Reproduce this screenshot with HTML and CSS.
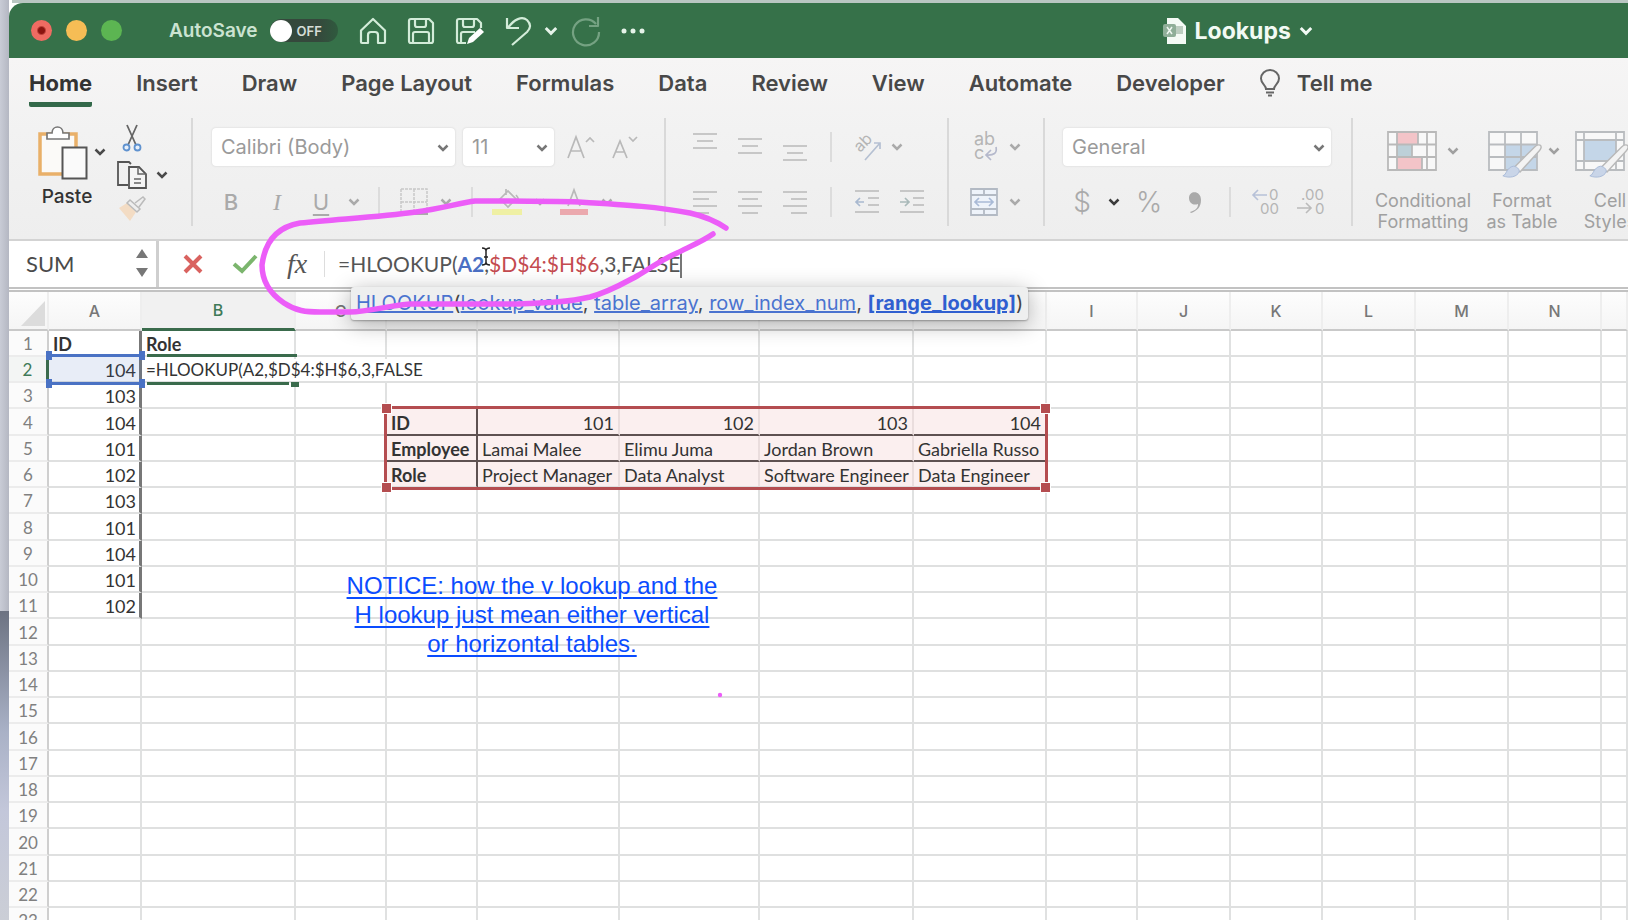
FILE: index.html
```html
<!DOCTYPE html>
<html lang="en">
<head>
<meta charset="utf-8">
<title>Lookups</title>
<link rel="stylesheet" href="styles.css">
</head>
<body>
<svg class="defs" width="0" height="0" aria-hidden="true">
  <symbol id="chev" viewBox="0 0 12 8"><path d="M1.5 1.5 6 6l4.500-4.500" fill="none" stroke="currentColor" stroke-width="2.500"/></symbol>
  <symbol id="brush" viewBox="0 0 44 38"><path d="M42 3c2 1 1 4-1 6L21 31l-6-5L36 5c2-2 4-3 6-2z" fill="#f3f3f3" stroke="#b9b9b9" stroke-width="1.500"/><path d="M14 25c3 0 7 3 6 6-2 5-10 7-17 4 4-1 4-9 11-10z" fill="#c9d5e8" stroke="#a9bbd8"/></symbol>
</svg>

<div class="window">
  <header class="titlebar">
    <div class="lights">
      <button class="light close" aria-label="Close"></button>
      <button class="light minimize" aria-label="Minimize"></button>
      <button class="light zoom" aria-label="Zoom"></button>
    </div>
    <label class="autosave"><span>AutoSave</span><input type="checkbox" class="sr"><span class="switch"><span class="knob"></span>OFF</span></label>
    <div class="quick">
      <button aria-label="Home"><svg width="28" height="28" viewBox="0 0 28 28"><path d="M2 13.500 14 2l12 11.500V25q0 1-1 1h-6v-8q0-3-3-3h-4q-3 0-3 3v8H3q-1 0-1-1z" class="ln"/></svg></button>
      <button aria-label="Save"><svg width="28" height="28" viewBox="0 0 28 28"><path d="M4 2h18l4 4v18q0 2-2 2H4q-2 0-2-2V4q0-2 2-2zM8 2v6q0 2 2 2h7q2 0 2-2V2M6 26V17q0-2 2-2h12q2 0 2 2v9" class="ln"/></svg></button>
      <button aria-label="Save as"><svg width="30" height="28" viewBox="0 0 30 28"><path d="M11 26H4q-2 0-2-2V4q0-2 2-2h18l4 4v5M8 2v6q0 2 2 2h7q2 0 2-2V2M6 26V17q0-2 2-2h12" class="ln"/><path d="M12 27l2-6L25 11l4 4-11 10z" fill="#fff"/></svg></button>
      <span class="history">
        <button aria-label="Undo"><svg width="28" height="30" viewBox="0 0 28 30"><path d="M2 2v10h12M3 12C9 3 17 0 22 4c5 5 3 9 0 12L7 29" class="ln"/></svg></button>
        <button aria-label="Undo history"><svg width="14" height="10"><use href="#chev"/></svg></button>
        <button aria-label="Redo" class="dim"><svg width="30" height="30" viewBox="0 0 30 30"><path d="M27 1v9h-9M25 8A13 13 0 1 0 28 16" class="ln"/></svg></button>
      </span>
      <button aria-label="More commands"><svg width="24" height="6" viewBox="0 0 24 6"><circle cx="3" cy="3" r="2.500"/><circle cx="12" cy="3" r="2.500"/><circle cx="21" cy="3" r="2.500"/></svg></button>
    </div>
    <button class="doc"><svg width="25" height="28" viewBox="0 0 25 28"><path d="M5 1h11l8 8v18H5z" fill="#f4faf5"/><path d="M12 9h9v8h-9z" fill="#bccdc0"/><rect x="1" y="7" width="13" height="13" rx="2" fill="#8fae98"/><path d="m5 10 5 7m0-7-5 7" stroke="#eef6f0" stroke-width="1.500"/></svg><span>Lookups</span><svg width="14" height="10"><use href="#chev"/></svg></button>
  </header>

  <section class="ribbon">
    <nav class="tabs">
      <button class="tab active">Home</button><button class="tab">Insert</button><button class="tab">Draw</button><button class="tab">Page Layout</button><button class="tab">Formulas</button><button class="tab">Data</button><button class="tab">Review</button><button class="tab">View</button><button class="tab">Automate</button><button class="tab">Developer</button>
      <button class="tab tell"><svg width="22" height="28" viewBox="0 0 22 28"><path d="M7 20c0-4-5-5-5-10.500a9 8.500 0 0 1 18 0C20 15 15 16 15 20zM7 23.500h8M9 26.500h4" fill="none" stroke="#666" stroke-width="2"/></svg>Tell me</button>
    </nav>
    <div class="commands">
      <div class="group clipboard">
        <button class="paste">
          <svg width="50" height="56" viewBox="0 0 50 56"><path d="M2 9h36v40H2z" fill="#fbfaf8" stroke="#e9b069" stroke-width="3.500"/><path d="M9 14V8h5c0-8 11-8 11 0h6v6z" fill="#fff" stroke="#777" stroke-width="1.700"/><path d="M24.500 22.500h24v31h-24z" fill="#fafafa" stroke="#555" stroke-width="2"/></svg>
          <span>Paste</span>
        </button>
        <button class="paste-menu" aria-label="Paste options"><svg width="12" height="8"><use href="#chev"/></svg></button>
        <div class="clips">
          <button aria-label="Cut"><svg width="20" height="28" viewBox="0 0 20 28"><path d="m5 1 9 20M15 1 6 21" stroke="#666" stroke-width="1.800"/><circle cx="4.500" cy="23.500" r="3" fill="#e6effa" stroke="#5f92cf" stroke-width="1.800"/><circle cx="15.500" cy="23.500" r="3" fill="#e6effa" stroke="#5f92cf" stroke-width="1.800"/></svg></button><span></span>
          <button aria-label="Copy"><svg width="30" height="30" viewBox="0 0 30 30"><path d="M11 25H1V2h11l2 2" fill="none" stroke="#555" stroke-width="1.800"/><path d="M12 7h10l7 7v14H12z" fill="#f5f5f5" stroke="#555" stroke-width="1.800"/><path d="M21 7v7h8M17 19h7M17 23h7" fill="none" stroke="#666" stroke-width="1.500"/></svg></button>
          <button aria-label="Copy options"><svg width="12" height="8"><use href="#chev"/></svg></button>
          <button aria-label="Format painter"><svg width="28" height="26" viewBox="0 0 28 26"><path d="m1 12 8-5 9 9-6 9z" fill="#f3dcc4"/><path d="m9 7 3-3 10 9-3 3zM17 7l8-6 2 2-6 8" fill="#eee" stroke="#bbb" stroke-width="1.500"/></svg></button>
        </div>
      </div>

      <div class="group font">
        <div class="row top">
          <div class="combo wide"><select aria-label="Font"><option>Calibri (Body)</option></select><svg width="12" height="8"><use href="#chev"/></svg></div>
          <div class="combo size"><select aria-label="Font size"><option>11</option></select><svg width="12" height="8"><use href="#chev"/></svg></div>
          <button aria-label="Grow font"><svg width="28" height="26" viewBox="0 0 28 26"><path d="m2 24 8-21 8 21M5 17h10M20 8l4-4 4 4" class="g"/></svg></button>
          <button aria-label="Shrink font"><svg width="28" height="26" viewBox="0 0 28 26"><path d="m2 24 7-17 7 17M4 18h10M18 3l4 4 4-4" class="g"/></svg></button>
        </div>
        <div class="row fontrow">
          <button class="bold">B</button><button class="italic">I</button><button class="under">U</button>
          <button aria-label="Underline options"><svg width="12" height="8"><use href="#chev"/></svg></button>
          <i class="bar"></i>
          <button aria-label="Borders"><svg width="28" height="28" viewBox="0 0 28 28"><path d="M1 1h26v25M1 1v25M14 1v25M1 14h26" fill="none" stroke="#c8c8c8" stroke-width="1.500" stroke-dasharray="3 1"/><path d="M0 26h28" stroke="#aaa" stroke-width="2"/></svg></button>
          <button aria-label="Border options"><svg width="12" height="8"><use href="#chev"/></svg></button>
          <i class="bar"></i>
          <button aria-label="Fill color"><svg width="30" height="30" viewBox="0 0 30 30"><path d="m8 12 8-8 8 8-8 8zM14 2v6M24 8q3 3 2 6" class="g"/><path d="M0 22h30v6H0z" fill="#eff0a4"/></svg></button>
          <button aria-label="Fill options"><svg width="12" height="8"><use href="#chev"/></svg></button>
          <button aria-label="Font color"><svg width="28" height="30" viewBox="0 0 28 30"><path d="m8 19 6-16 6 16M10 13h8" class="g"/><path d="M0 22h28v6H0z" fill="#eba9ae"/></svg></button>
          <button aria-label="Font color options"><svg width="12" height="8"><use href="#chev"/></svg></button>
        </div>
      </div>

      <div class="group align">
        <div class="row alignrow first">
          <button aria-label="Top align"><svg width="26" height="30" viewBox="0 0 26 30"><path d="M1 2h24M5 9h16M1 16h24" class="g"/></svg></button>
          <button aria-label="Middle align"><svg width="26" height="30" viewBox="0 0 26 30"><path d="M1 7h24M5 14h16M1 21h24" class="g"/></svg></button>
          <button aria-label="Bottom align"><svg width="26" height="30" viewBox="0 0 26 30"><path d="M1 14h24M5 21h16M1 28h24" class="g"/></svg></button>
          <i class="bar"></i>
          <button aria-label="Orientation"><svg width="30" height="28" viewBox="0 0 30 28"><text x="0" y="0" transform="translate(8 20) rotate(-45)" class="glyph">ab</text><path d="M13 27 28 10M22 10h6v6" fill="none" stroke="#b5c0d2" stroke-width="1.700"/></svg></button>
          <button aria-label="Orientation options"><svg width="12" height="8"><use href="#chev"/></svg></button>
        </div>
        <div class="row alignrow">
          <button aria-label="Align left"><svg width="26" height="24" viewBox="0 0 26 24"><path d="M1 2h24M1 9h16M1 16h24M1 23h16" class="g"/></svg></button>
          <button aria-label="Center"><svg width="26" height="24" viewBox="0 0 26 24"><path d="M1 2h24M5 9h16M1 16h24M5 23h16" class="g"/></svg></button>
          <button aria-label="Align right"><svg width="26" height="24" viewBox="0 0 26 24"><path d="M1 2h24M9 9h16M1 16h24M9 23h16" class="g"/></svg></button>
          <i class="bar"></i>
          <button aria-label="Decrease indent"><svg width="26" height="24" viewBox="0 0 26 24"><path d="M1 1h24M14 8h11M14 15h11M1 22h24" class="g"/><path d="M10 12H2m4-4-4 4 4 4" fill="none" stroke="#a9b9d0" stroke-width="1.700"/></svg></button>
          <button aria-label="Increase indent"><svg width="26" height="24" viewBox="0 0 26 24"><path d="M1 1h24M14 8h11M14 15h11M1 22h24" class="g"/><path d="M1 12h9m-4-4 4 4-4 4" fill="none" stroke="#a9b9b9" stroke-width="1.700"/></svg></button>
        </div>
      </div>

      <div class="group wrap">
        <div class="row pair">
          <button aria-label="Wrap text"><svg width="28" height="32" viewBox="0 0 28 32"><text x="4" y="14" class="glyph big">ab</text><text x="4" y="28" class="glyph big">c</text><path d="M26 16q2 9-10 8m5-5-5 5 5 5" fill="none" stroke="#b5b9cc" stroke-width="1.700"/></svg></button>
          <button aria-label="Wrap options"><svg width="12" height="8"><use href="#chev"/></svg></button>
        </div>
        <div class="row pair">
          <button aria-label="Merge"><svg width="28" height="28" viewBox="0 0 28 28"><path d="M1 1h26v26H1zM1 7h26M1 21h26M14 1v6M14 21v6" fill="#eef3fa" stroke="#b3bac4" stroke-width="1.800"/><path d="M5 14h18m-14-4-4 4 4 4m10-8 4 4-4 4" fill="none" stroke="#a9bad6" stroke-width="1.700"/></svg></button>
          <button aria-label="Merge options"><svg width="12" height="8"><use href="#chev"/></svg></button>
        </div>
      </div>

      <div class="group number">
        <div class="row top">
          <div class="combo full"><select aria-label="Number format"><option>General</option></select><svg width="12" height="8"><use href="#chev"/></svg></div>
        </div>
        <div class="row numrow">
          <button class="sym">$</button>
          <button class="dark" aria-label="Currency options"><svg width="12" height="8"><use href="#chev"/></svg></button>
          <button class="sym">%</button>
          <button aria-label="Comma style"><svg width="14" height="22" viewBox="0 0 14 22"><path d="M2 21c6-2 8-4 8-8C4 15 1 11 1 7c0-8 12-8 12 2 0 7-4 11-10 13z" fill="#aaa"/></svg></button>
          <i class="bar"></i>
          <button aria-label="Increase decimal"><svg width="30" height="30" viewBox="0 0 30 30"><text x="18" y="13" class="glyph num">0</text><text x="9" y="27" class="glyph num">00</text><path d="M16 8H2m5-5L2 8l5 5" fill="none" stroke="#b7c1d8" stroke-width="1.600"/></svg></button>
          <button aria-label="Decrease decimal"><svg width="30" height="30" viewBox="0 0 30 30"><text x="5" y="13" class="glyph num">.00</text><text x="19" y="27" class="glyph num">0</text><path d="M1 21h14m-5-5 5 5-5 5" fill="none" stroke="#bbb" stroke-width="1.600"/></svg></button>
        </div>
      </div>

      <div class="group styles">
        <button class="style cond"><span class="pic"><svg width="50" height="40" viewBox="0 0 50 40"><path d="M1 1h48v38H1z" fill="#f8f8f8"/><path d="M10 1h21v12H10zM10 26h25v12H10z" fill="#f3c4c8"/><path d="M10 14h15v12H10z" fill="#bdd0d8"/><path d="M1 1h48v38H1zM1 13.500h48M1 26h48M10 1v38M31 1v12M25 14v12M35 26v12M40 1v38" fill="none" stroke="#b9b9b9" stroke-width="1.800"/></svg><svg width="12" height="8"><use href="#chev"/></svg></span><span>Conditional<br>Formatting</span></button>
        <button class="style"><span class="pic"><svg width="54" height="48" viewBox="0 0 54 48"><path d="M1 1h48v38H1z" fill="#f8f8f8"/><path d="M17 13h32v26H17z" fill="#c4d6e8"/><path d="M1 1h48v38H1zM1 13.500h48M1 26h48M17 1v38M33 1v38" fill="none" stroke="#b9bcbf" stroke-width="1.800"/><use href="#brush" x="12" y="11" width="42" height="37"/></svg><svg width="12" height="8"><use href="#chev"/></svg></span><span>Format<br>as Table</span></button>
        <button class="style cell"><span class="pic"><svg width="54" height="48" viewBox="0 0 54 48"><path d="M1 1h48v38H1z" fill="#f8f8f8"/><path d="M9 9h32v21H9z" fill="#c4d6e8"/><path d="M1 1h48v38H1zM1 9h48M1 30h48M9 1v38M41 1v38" fill="none" stroke="#b9bcbf" stroke-width="1.800"/><use href="#brush" x="12" y="11" width="42" height="37"/></svg></span><span>Cell<br>Styles</span></button>
      </div>
    </div>
  </section>

  <section class="formula-bar">
    <div class="namebox"><input type="text" value="SUM" aria-label="Name box"><svg width="12" height="30" viewBox="0 0 12 30"><path d="M6 1l6 9H0zM6 29l6-9H0z" fill="#777"/></svg></div>
    <div class="entry">
      <button aria-label="Cancel"><svg width="20" height="20" viewBox="0 0 20 20"><path d="m2 2 16 16M18 2 2 18" stroke="#d9625f" stroke-width="4"/></svg></button>
      <button aria-label="Enter"><svg width="26" height="20" viewBox="0 0 26 20"><path d="m2 10 8 7L24 2" fill="none" stroke="#7bb56d" stroke-width="4"/></svg></button>
      <button class="fx" aria-label="Insert function">fx</button>
      <div class="formula" role="textbox" aria-label="Formula" contenteditable="true" spellcheck="false">=HLOOKUP(<span class="blue">A2</span>,<span class="red">$D$4:$H$6</span>,3,FALSE</div><i class="caret"></i>
    </div>
    <div class="hint"><a href="#">HLOOKUP</a>(<a href="#">lookup_value</a>, <a href="#">table_array</a>, <a href="#">row_index_num</a>, <a href="#" class="now">[range_lookup]</a>)</div>
  </section>

  <main class="sheet">
    <table>
      <colgroup><col class="w-head"><col class="w93"><col class="w154"><col class="w91"><col class="w91"><col class="w142"><col class="w140"><col class="w154"><col class="w133"><col class="w91"><col class="w93"><col class="w92"><col class="w93"><col class="w93"><col class="w93"><col></colgroup>
      <thead><tr id="letters"></tr></thead>
      <tbody id="rows"></tbody>
    </table>
    <div class="pick a2"><i></i><i></i><i></i><i></i></div>
    <div class="edit-line upper"></div><div class="edit-line lower"></div><i class="grip"></i>
    <div class="pick range"><i></i><i></i><i></i><i></i></div>
    <a class="note" href="#">NOTICE: how the v lookup and the<br>H lookup just mean either vertical<br>or horizontal tables.</a>
  </main>

  <svg class="ink" width="720" height="720" viewBox="0 0 720 720" aria-hidden="true">
    <path d="M717 225C708 219 699 214 681 210 650 204 620 202 570 199 535 198 500 198 466 198 451 200 430 206 407 209 370 214 330 216 291 220 268 224 256 238 253 262 253 278 260 290 275 300 287 308 297 309 311 309L341 309C360 309 382 302 401 301L508 301C535 300 560 299 581 294 600 289 615 280 628 273 642 265 650 258 668 250 682 243 694 238 704 231" fill="none" stroke="#ec5df8" stroke-width="5.500" stroke-linecap="round" stroke-linejoin="round"/>
    <circle cx="711" cy="692" r="2.200" fill="#ec5df8"/>
    <path d="M474 245q3 0 3 3v10q0 3-3 3M480 245q-3 0-3 3v10q0 3 3 3M475 254h4" fill="none" stroke="#fff" stroke-width="3"/>
    <path d="M473 245q4 0 4 3v11q0 3-4 3M481 245q-4 0-4 3v11q0 3 4 3M475 254h4" fill="none" stroke="#222" stroke-width="1.500"/>
  </svg>
</div>
<script src="script.js"></script>
</body>
</html>
```

FILE: styles.css
```css
* { box-sizing: border-box; }
body {
  margin: 0;
  height: 100vh;
  overflow: hidden;
  padding: 3px 0 0 9px;
  background:
    linear-gradient(#b9c6c2, #b9c6c2) 12px 0 / 100% 3px no-repeat,
    linear-gradient(#6d7382, #a9b1c6 120px, #c3c7da 200px, #cbced6) 0 611px / 100% 309px no-repeat,
    linear-gradient(90deg, #c9ccd6, #b4b7c2) 0 0 / 9px 100% repeat-y;
  font-family: Inter, "Open Sans", sans-serif;
  color: #333;
}
.defs { position: absolute; }
button { background: none; border: 0; padding: 0; margin: 0; font: inherit; color: inherit; display: flex; align-items: center; justify-content: center; }
svg { display: block; flex: none; }
button svg { overflow: visible; }
.sr { position: absolute; opacity: 0; }
.window { position: relative; height: 100%; display: flex; flex-direction: column; overflow: hidden; border-top-left-radius: 14px; background: #fff; }

.titlebar { flex: none; height: 55px; display: flex; align-items: center; background: #367149; color: #e6f3e9; padding-left: 22px; }
.lights { display: flex; gap: 14px; }
.light { width: 21px; height: 21px; border-radius: 50%; }
.close { background: radial-gradient(circle, #8b1410 0 3px, #ef6b62 5px); }
.minimize { background: #f6bd55; }
.zoom { background: #5cb552; }
.autosave { display: flex; align-items: center; gap: 12px; margin-left: 47px; font-size: 19px; font-weight: 600; color: #cbe3d1; }
.switch { display: flex; align-items: center; gap: 5px; width: 68px; height: 23px; border-radius: 12px; background: linear-gradient(90deg, #35483c 70%, #2f5a3e); font-size: 13px; color: #d5ddd7; }
.knob { width: 22px; height: 22px; border-radius: 50%; background: #fff; }
.quick { display: flex; align-items: center; gap: 20px; margin-left: 21px; fill: #e6f3e9; }
.history { display: flex; align-items: center; gap: 13px; }
.history button:nth-child(2) { margin-left: -2px; }
.quick .dim { opacity: 0.4; }
.ln { fill: none; stroke: #d3ecd9; stroke-width: 2.2; stroke-linejoin: round; }
.doc { gap: 8px; margin-left: 517px; font-size: 23px; font-weight: 700; color: #f2faf4; }

.ribbon { flex: none; height: 183px; background: linear-gradient(#f6f5f5, #f2f2f2 40%, #eeeeee); border-bottom: 2px solid #d3d3d3; overflow: hidden; }
.tabs { display: flex; height: 60px; padding-left: 20px; gap: 44px; }
.tab { flex: none; height: 49px; padding-top: 5px; font-size: 22px; font-weight: 600; color: #484848; border-bottom: 5px solid transparent; border-radius: 2px; }
.tab.active { font-weight: 700; color: #333; border-bottom-color: #33694a; }
.tell { gap: 16px; margin-left: -10px; }
.commands { display: flex; height: 108px; }
.group { flex: none; border-right: 2px solid #d9d9d9; color: #aaa; }
.row { display: grid; align-items: center; justify-items: center; justify-content: start; height: 54px; }
.g { fill: none; stroke: #b9b9b9; stroke-width: 1.7; }
.glyph { font: 16px Inter, sans-serif; fill: #b5b5b5; }
.glyph.big { font-size: 18px; }
.glyph.num { font-size: 15px; }
.bar { width: 2px; height: 30px; background: #dcdcdc; }
.clipboard { width: 184px; display: grid; grid-template-columns: 50px 24px 1fr; padding-left: 29px; color: #4a4a4a; }
.paste { flex-direction: column; justify-content: flex-start; padding-top: 7px; gap: 4px; font-size: 19px; font-weight: 500; color: #333; }
.paste span { padding-left: 8px; }
.paste-menu { height: 68px; }
.clips { display: grid; grid-template-columns: 40px 20px; grid-template-rows: 40px 34px 34px; align-items: center; }
.clips button { height: 100%; }
.font { width: 473px; padding-left: 19px; }
.font .top { grid-template-columns: 243px 91px 36px 38px; column-gap: 8px; }
.row.top { padding-top: 4px; }
.combo { position: relative; width: 100%; height: 38px; }
.combo select { appearance: none; width: 100%; height: 100%; border: 0; border-radius: 4px; background: #fff; padding: 0 9px; font-family: inherit; font-size: 20px; color: #9a9a9a; box-shadow: 0 0 2px #ccc; }
.combo svg { position: absolute; right: 6px; top: 16px; color: #777; }
.fontrow { grid-template-columns: 38px 54px 34px 32px 18px 52px 12px 40px 30px 36px 32px 34px; font-size: 22px; }
.bold { font-weight: 500; }
.italic { font: italic 24px "Liberation Serif", serif; }
.under { text-decoration: underline; text-underline-offset: 4px; }
.align { width: 283px; padding-left: 16px; }
.alignrow { grid-template-columns: 45px 45px 45px 27px 45px 45px; padding-top: 4px; }
.alignrow.first { grid-template-columns: 45px 45px 45px 27px 45px 16px; }
.row + .row { padding-top: 2px; height: 58px; }
.wrap { width: 96px; padding-left: 14px; }
.pair { grid-template-columns: 42px 12px; column-gap: 4px; padding-top: 4px; }
.number { width: 308px; padding: 0 18px; }
.number .top { grid-template-columns: 268px; }
.numrow { grid-template-columns: 38px 26px 44px 48px 22px 50px 40px; }
.sym { font: 300 28px Inter, sans-serif; }
.dark { color: #3c3c3c; }
.styles { display: flex; border: 0; gap: 7px; padding-left: 21px; }
.style { width: 86px; flex-direction: column; justify-content: flex-start; padding-top: 13px; font-size: 18px; line-height: 21px; color: #a0a0a0; }
.style.cond { width: 98px; }
.style.cell { width: 76px; }
.pic { flex: none; display: flex; gap: 6px; width: 100%; height: 55px; align-items: flex-start; padding-left: 9px; }
.style .pic + span { margin-top: 4px; }
.pic svg + svg { margin-top: 16px; }
.cond .pic { padding-left: 13px; gap: 10px; }
.cell .pic { padding-left: 3px; }

.formula-bar { flex: none; position: relative; z-index: 2; display: flex; height: 51px; border-bottom: 5px double #c2c2c2; background: #fff; }
.namebox { display: flex; align-items: center; width: 150px; padding: 0 8px 2px 17px; border-right: 3px solid #cfcfcf; }
.namebox input { flex: 1; min-width: 0; border: 0; padding: 0; background: none; font: 22px Lato, sans-serif; color: #4a4a4a; }
.entry { flex: 1; display: flex; align-items: center; padding-left: 24px; }
.entry button { flex: none; width: 20px; margin-right: 32px; }
.entry .fx { margin-right: 17px; font: italic 28px "Liberation Serif", serif; color: #555; }
.formula { border-left: 1px solid #ddd; padding-left: 13px; font: 21px/26px Lato, sans-serif; color: #555; white-space: nowrap; outline: 0; }
.blue { color: #4a6fc4; font-weight: 700; }
.red { color: #c44b50; }
.caret { width: 2px; height: 28px; background: #777; }
.hint { position: absolute; left: 342px; top: 46px; height: 33px; padding: 0 5px; border-radius: 3px; background: #eeefef; box-shadow: 0 4px 22px rgba(0, 0, 0, 0.3), 0 1px 2px rgba(0, 0, 0, 0.3); font-size: 20px; line-height: 33px; white-space: nowrap; color: #444; }
.hint a { color: #4a73cf; }
.hint .now { font-weight: 700; color: #2f5fd0; }

.sheet { position: relative; flex: 1; min-height: 0; overflow: hidden; }
table { table-layout: fixed; width: 100%; border-collapse: separate; border-spacing: 0; font: 18px/22px Lato, sans-serif; color: #333; }
.w-head { width: 40px; } .w91 { width: 91px; } .w92 { width: 92px; } .w93 { width: 93px; } .w133 { width: 133px; } .w140 { width: 140px; } .w142 { width: 142px; } .w154 { width: 154px; }
thead th { height: 39px; padding: 0; font: 500 16px Inter, sans-serif; color: #777; background: linear-gradient(#fdfdfd, #f5f5f5); border-bottom: 2px solid #c9c9c9; border-right: 2px solid #eeeeee; }
thead th.on { background: #f1f1f1; color: #3f7a58; border-bottom: 3px solid #3a6b4c; }
.corner svg { margin: 6px 0 0 12px; }
tbody tr { height: 26px; }
tbody tr:nth-child(4n) { height: 27px; }
td, tbody th { height: inherit; padding: 2px 0 0 4px; border-right: 2px solid #e0e1e1; border-bottom: 2px solid #dfe0e0; white-space: nowrap; }
tbody th { padding: 2px 0 0; font-size: 17px; font-weight: 400; text-align: center; color: #808080; background: #fbfbfb; border-right-color: #cfcfcf; border-bottom-color: #ececec; }
tbody th.on { color: #3f7a58; background: #f3f5f4; border-right: 3px solid #3a6b4c; }
td.n { text-align: right; padding-right: 4px; }
td.b { font-weight: 700; }
td.edge { border-right: 3px solid #777; padding-right: 3px; }
td.tint { background: #fbefef; border-right-color: #eadddd; }
td.tint.b { border-right-color: #5e5151; }
td.rule { border-bottom-color: #5e5151; }
.typing { position: relative; z-index: 1; display: block; width: max-content; font-size: 17px; background: #fff; }
.pick { position: absolute; }
.pick i { position: absolute; width: 9px; height: 9px; }
.pick i:nth-child(1) { left: -6px; top: -6px; }
.pick i:nth-child(2) { right: -6px; top: -6px; }
.pick i:nth-child(3) { left: -6px; bottom: -6px; }
.pick i:nth-child(4) { right: -6px; bottom: -6px; }
.a2 { left: 40px; top: 62px; width: 93px; height: 31px; border: 3px solid #4a72c4; border-left-color: transparent; border-right-color: transparent; background: rgba(74, 114, 196, 0.13); }
.a2 i { background: #4a72c4; width: 6px; }
.range { left: 375px; top: 114px; width: 664px; height: 84px; border: 3px solid #b44d50; }
.range i { background: #b44d50; border: 1px solid #fff; width: 11px; height: 11px; }
.edit-line { position: absolute; left: 138px; height: 3px; background: #3a6b4c; }
.upper { top: 62px; width: 150px; }
.lower { top: 90px; width: 142px; }
.grip { position: absolute; left: 282px; top: 90px; width: 8px; height: 5px; background: #3a6b4c; }
.note { position: absolute; left: 323px; top: 279px; width: 400px; text-align: center; font: 24px/29px "Liberation Sans", Arial, sans-serif; color: #0a4cff; white-space: nowrap; text-underline-offset: 3px; }
.ink { position: absolute; left: 0; top: 0; z-index: 3; pointer-events: none; }
```

FILE: script.js
```javascript
const letters = "ABCDEFGHIJKLMNO".split("");
const ids = [104, 103, 104, 101, 102, 103, 101, 104, 101, 102];
const people = {
  4: ["ID", 101, 102, 103, 104],
  5: ["Employee", "Lamai Malee", "Elimu Juma", "Jordan Brown", "Gabriella Russo"],
  6: ["Role", "Project Manager", "Data Analyst", "Software Engineer", "Data Engineer"]
};

const head = document.getElementById("letters");
head.innerHTML = '<th class="corner" aria-label="Select all"><svg width="24" height="25" viewBox="0 0 24 25"><path d="M24 0v25H0z" fill="#dcdcdc"/></svg></th>' +
  letters.map(l => `<th${l === "B" ? ' class="on"' : ""}>${l === "O" ? "" : l}</th>`).join("");

let html = "";
for (let r = 1; r <= 23; r++) {
  html += `<tr><th${r === 2 ? ' class="on"' : ""}>${r}</th>`;
  letters.forEach((l, c) => {
    const cls = [];
    let text = "";
    if (c === 0 && r <= 11) {
      text = r === 1 ? "ID" : ids[r - 2];
      cls.push("edge", r === 1 ? "b" : "n");
    }
    if (r === 1 && c === 1) { text = "Role"; cls.push("b"); }
    if (r === 2 && c === 1) text = '<span class="typing">=HLOOKUP(A2,$D$4:$H$6,3,FALSE</span>';
    if (people[r] && c >= 3 && c <= 7) {
      text = people[r][c - 3];
      cls.push("tint");
      if (c === 3) cls.push("b");
      if (typeof text === "number") cls.push("n");
      if (r < 6) cls.push("rule");
    }
    html += `<td class="${cls.join(" ")}">${text}</td>`;
  });
  html += "</tr>";
}
document.getElementById("rows").innerHTML = html;
```
